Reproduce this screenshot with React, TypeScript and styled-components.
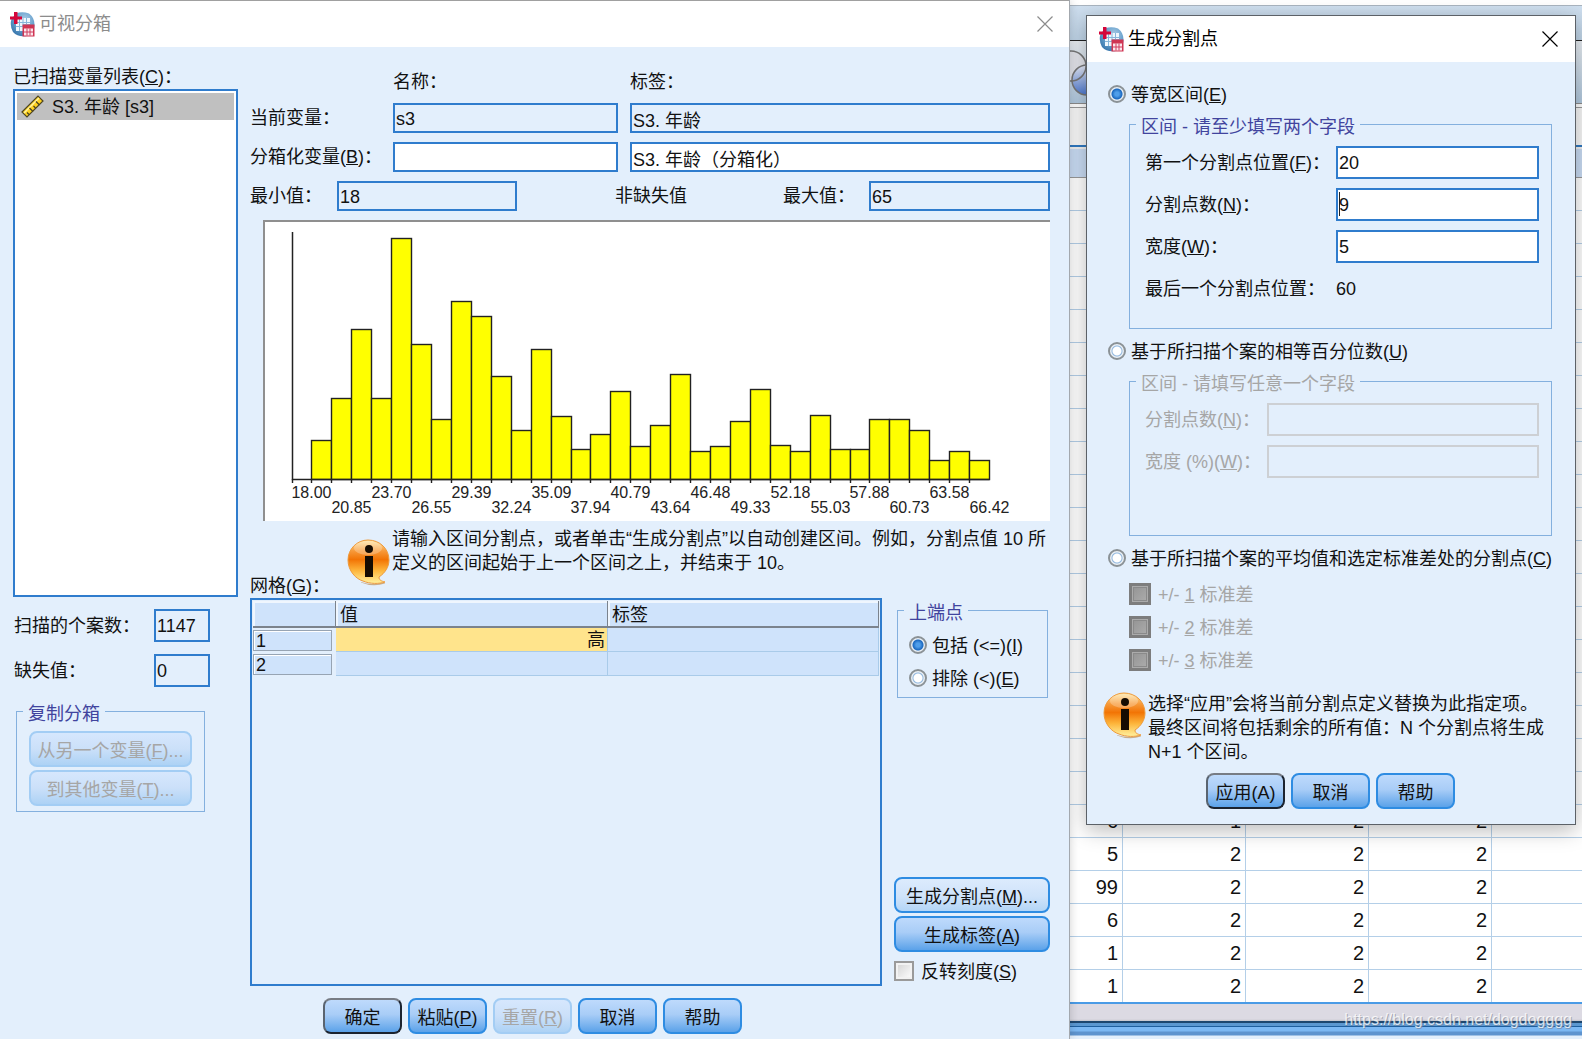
import React from "react";
import styled, { createGlobalStyle, css } from "styled-components";

const GlobalStyle = createGlobalStyle`
  * { box-sizing: border-box; }
  body { margin: 0; background: #e3effc; }
  body, button, input, table {
    font-family: "Liberation Sans", "Noto Sans CJK SC", sans-serif;
    font-size: 18px;
    line-height: 24px;
    color: #111;
  }
`;

const color = {
  panel: "#e3effc",
  line: "#2f7ccd",
  groove: "#84b0de",
  legend: "#41449e",
  muted: "#a6a6a6",
  cell: "#cfe3fb",
  grid: "#a9cbe9",
};

/* ---------- windows ---------- */

const Desktop = styled.div`
  display: flex;
  min-height: 100vh;
  overflow: hidden;
`;

const BinningWindow = styled.main`
  flex: 1 1 auto;
  position: relative;
  z-index: 1;
  display: flex;
  flex-direction: column;
  background: ${color.panel};
  border-top: 1px solid #a0a0a0;
  box-shadow: 0 0 0 1px #a3a8ae, 0 0 10px rgba(0, 0, 0, 0.22);
`;

const TitleBar = styled.header<{ $inactive?: boolean }>`
  display: flex;
  align-items: center;
  gap: 4px;
  height: 46px;
  padding: 0 16px 0 10px;
  background: #fff;
  color: ${(p) => (p.$inactive ? "#8c8c8c" : "#000")};
`;

const Title = styled.h1`
  flex: 1;
  margin: 0;
  font-size: 18px;
  font-weight: 400;
`;

const CloseButton = styled.button`
  display: flex;
  padding: 0;
  border: 0;
  background: none;
  color: inherit;
`;

const WindowBody = styled.div`
  flex: 1;
  display: grid;
  grid-template-columns: 225px 1fr;
  column-gap: 12px;
  padding: 18px 19px 12px 13px;
`;

const ButtonBar = styled.div`
  display: flex;
  justify-content: center;
  gap: 6px;
`;

const Footer = styled(ButtonBar)`
  padding: 0 4px 5px 0;
`;

/* ---------- controls ---------- */

type Tone = "normal" | "soft" | "default";

const Button = styled.button<{ $tone?: Tone; $wide?: boolean }>`
  width: ${(p) => (p.$wide ? "100%" : "79px")};
  height: 36px;
  padding: 3px 0 0;
  white-space: nowrap;
  border: 2px solid #2e8ce2;
  border-radius: 8px;
  background: linear-gradient(#bedafc, #a9cdf7 45%, #5ba2e9);
  ${(p) =>
    p.$tone === "soft" &&
    css`
      background: linear-gradient(#dcebfd, #cfe3fa 55%, #b3d5f6);
    `}
  ${(p) =>
    p.$tone === "default" &&
    css`
      border-color: #777c84 #1c2430 #1c2430 #5a6470;
    `}
  &:disabled {
    color: ${color.muted};
    border-color: #a3cdf4;
    background: linear-gradient(#d6e7fd, #cbe0f9 50%, #add2f5);
  }
`;

const Field = styled.input<{ $tall?: boolean; $caret?: boolean }>`
  width: 100%;
  min-width: 0;
  height: ${(p) => (p.$tall ? 33 : 30)}px;
  padding: 2px 1px 0;
  border: 2px solid ${color.line};
  border-radius: 0;
  background: #fff;
  outline: none;
  &:read-only {
    background: ${color.panel};
  }
  &:disabled {
    background: ${color.panel};
    border-color: #cdd0d4;
  }
  ${(p) =>
    p.$caret &&
    css`
      background: linear-gradient(#222, #222) 1px 2px / 1px 24px no-repeat #fff;
    `}
`;

const Radio = styled.input.attrs({ type: "radio" })`
  appearance: none;
  flex: none;
  width: 18px;
  height: 18px;
  margin: 0;
  border: 2px solid #8b9296;
  border-radius: 50%;
  background: radial-gradient(circle, #fff 0 4px, #8fb6de 5px, #e9eff4 6px);
  &:checked {
    background: radial-gradient(circle, #4f9eea 0 2px, #1a68c0 5px, #e6edf3 6px);
  }
`;

const Checkbox = styled.input.attrs({ type: "checkbox" })`
  appearance: none;
  flex: none;
  width: 20px;
  height: 20px;
  margin: 0;
  border: 2px solid #9a9a9a;
  background: linear-gradient(135deg, #d2d2d2, #fff);
  box-shadow: inset 0 0 0 2px #f2f2f2;
  &:disabled {
    width: 22px;
    height: 22px;
    border: 3px solid #7d7d7d;
    background: linear-gradient(135deg, #939393, #adadad);
    box-shadow: inset 0 0 0 1px #ababab, inset 0 0 0 2px #8a8a8a;
  }
`;

const Option = styled.label<{ $muted?: boolean; $gap: number; $height: number }>`
  display: flex;
  align-items: center;
  gap: ${(p) => p.$gap}px;
  height: ${(p) => p.$height}px;
  white-space: nowrap;
  color: ${(p) => (p.$muted ? color.muted : "inherit")};
  span {
    padding-top: 2px;
  }
`;

const Label = styled.label<{ $muted?: boolean }>`
  white-space: nowrap;
  color: ${(p) => (p.$muted ? color.muted : "inherit")};
`;

const Group = styled.fieldset<{ $muted?: boolean }>`
  min-width: 0;
  margin: 0;
  padding: 0;
  border: 1px solid ${color.groove};
  legend {
    height: 24px;
    margin-left: 6px;
    padding: 7px 5px 0;
    line-height: 17px;
    color: ${(p) => (p.$muted ? color.muted : color.legend)};
  }
`;

/* ---------- left column ---------- */

const SideColumn = styled.section`
  display: flex;
  flex-direction: column;
`;

const VariableList = styled.ul`
  height: 508px;
  margin: 0 0 12px;
  padding: 2px;
  list-style: none;
  border: 2px solid ${color.line};
  background: #fff;
`;

const VariableItem = styled.li`
  display: flex;
  align-items: center;
  gap: 8px;
  height: 27px;
  padding: 0 4px;
  background: #c0c0c0;
`;

const CountRow = styled.div`
  display: grid;
  grid-template-columns: 1fr 56px;
  align-items: center;
  margin: 0 28px 12px 1px;
`;

const CopyGroup = styled(Group)`
  width: 189px;
  margin-left: 3px;
  div {
    display: grid;
    gap: 3px;
    padding: 8px 12px 5px;
  }
`;

/* ---------- right column ---------- */

const MainColumn = styled.section`
  display: flex;
  flex-direction: column;
  padding-top: 5px;
`;

const VariableGrid = styled.div`
  display: grid;
  grid-template-columns: 131px 225px 1fr;
  gap: 9px 12px;
  align-items: center;
`;

const RangeRow = styled.div`
  display: grid;
  grid-template-columns: 87px 180px 1fr 86px 181px;
  align-items: center;
  margin: 9px 0;
`;

const RangeCaption = styled.span`
  padding-left: 98px;
`;

const ChartFrame = styled.figure`
  height: 301px;
  margin: 0 0 6px 13px;
  background: #fff;
  border: solid #8f8f8f;
  border-width: 2px 0 0 2px;
  svg {
    display: block;
  }
`;

const HintRow = styled.div`
  display: grid;
  grid-template-columns: 97px 45px 1fr;
  height: 71px;
  ${Label} {
    align-self: end;
  }
  svg {
    margin-top: 12px;
  }
`;

const Hint = styled.p`
  margin: 0;
`;

const LowerRow = styled.div`
  flex: 1;
  display: grid;
  grid-template-columns: 1fr 156px;
  column-gap: 12px;
`;

const GridBox = styled.div`
  padding: 1px;
  border: 2px solid ${color.line};
`;

const BinTable = styled.table`
  width: 100%;
  table-layout: fixed;
  border-collapse: separate;
  border-spacing: 0;
  thead th {
    height: 27px;
    padding: 3px 4px 0;
    text-align: left;
    font-weight: 400;
    line-height: 20px;
    background: ${color.cell};
    border: solid #7b838d;
    border-width: 0 1px 2px 0;
    box-shadow: inset 2px 2px 0 #eff6fe;
  }
  thead th:first-child {
    width: 83px;
  }
  thead th:nth-child(2) {
    width: 272px;
  }
`;

const RowHeader = styled.th`
  height: 24px;
  padding: 0 4px 0 0;
  text-align: left;
  font-weight: 400;
  span {
    display: block;
    height: 21px;
    padding-left: 2px;
    line-height: 20px;
    background: ${color.cell};
    border: 1px solid #97a4b3;
    box-shadow: inset 1px 1px 0 #fff;
  }
`;

const BinCell = styled.td<{ $active?: boolean }>`
  height: 24px;
  padding: 0 2px;
  text-align: right;
  line-height: 22px;
  background: ${(p) => (p.$active ? "#ffe48c" : color.cell)};
  border: solid ${color.grid};
  border-width: 0 1px 1px 0;
`;

const Tools = styled.div`
  display: flex;
  flex-direction: column;
`;

const EndpointGroup = styled(Group)`
  margin: 0 2px auto 3px;
  div {
    padding: 6px 0 3px 11px;
  }
`;

const ToolButtons = styled.div`
  display: grid;
  gap: 3px;
  margin-bottom: 4px;
`;

/* ---------- data editor behind the dialog ---------- */

const Editor = styled.section`
  flex: 0 0 513px;
  position: relative;
  display: flex;
  flex-direction: column;
  background: #fff;
`;

const EditorCaption = styled.div`
  height: 36px;
  margin-top: 5px;
  border-top: 1px solid #a9b4bf;
  border-bottom: 1px solid #222;
  background: linear-gradient(#cfdfef, #bfd4e7);
`;

const EditorToolbar = styled.div`
  height: 63px;
  padding-top: 9px;
  border-bottom: 1px solid #8d8d8d;
  background: linear-gradient(#e8edf2, #b0c8de);
  svg {
    display: block;
  }
`;

const CellBar = styled.div`
  height: 40px;
  margin-top: 3px;
  background: #f8f8f8;
  border-top: 1px solid #999;
  border-bottom: 2px solid #2f78c0;
`;

const ColumnBar = styled.div`
  height: 31px;
  border-top: 2px solid #f0f0f0;
  border-bottom: 1px solid #999;
  background: #c9dcf4;
`;

const DataTable = styled.table`
  width: 100%;
  table-layout: fixed;
  border-spacing: 0;
  border-bottom: 2px solid #4a9be6;
  td {
    height: 33px;
    padding: 0 4px 0 0;
    font-size: 20px;
    text-align: right;
    border: solid #b4cfe8;
    border-width: 0 1px 1px 0;
  }
  tr:first-child td {
    width: 123px;
  }
  tr:first-child td:first-child {
    width: 54px;
  }
  tr:first-child td:last-child {
    width: auto;
  }
  td:last-child {
    border-right: 0;
  }
  tr:last-child td {
    border-bottom: 0;
    height: 32px;
  }
`;

const StatusBar = styled.footer`
  flex: 1;
  padding-right: 10px;
  text-align: right;
  font-size: 16px;
  line-height: 32px;
  color: rgba(255, 255, 255, 0.75);
  text-shadow: 1px 1px 0 rgba(120, 125, 140, 0.55);
  background: linear-gradient(
    #dcdae3 0 15px,
    #c4c4cc 17px,
    #1d466e 17px 19px,
    #5b97d0 19px 22px,
    #1f5f9e 22px 23px,
    #7cb8f3 23px 27px,
    #5e94cf 28px 31px,
    #e3effc 32px
  );
`;

/* ---------- cut point dialog ---------- */

const Dialog = styled.div`
  position: absolute;
  top: 15px;
  right: 6px;
  width: 490px;
  background: ${color.panel};
  border: 1px solid #5c6167;
  box-shadow: 0 5px 20px rgba(0, 0, 0, 0.28);
  ${TitleBar} {
    padding: 0 17px 0 12px;
    gap: 4px;
  }
`;

const DialogBody = styled.form`
  padding: 20px 22px 15px 21px;
`;

const DialogGroup = styled(Group)<{ $labels: number; $rest: number }>`
  margin: 6px 1px 10px 21px;
  > div {
    display: grid;
    grid-template-columns: ${(p) => p.$labels}px 1fr;
    grid-auto-rows: 33px;
    row-gap: 9px;
    align-items: center;
    padding: 10px 12px ${(p) => p.$rest}px 15px;
  }
`;

const DeviationList = styled.div`
  padding: 7px 0 16px 21px;
`;

const DialogHint = styled.div`
  display: grid;
  grid-template-columns: 45px 1fr;
  margin: 0 0 9px -5px;
`;

/* ---------- drawings ---------- */

const AppLogo = () => (
  <svg width="25" height="25" viewBox="0 0 25 25" aria-hidden="true">
    <defs>
      <radialGradient id="globe" cx="0.6" cy="0.3" r="0.8">
        <stop offset="0" stopColor="#a9cbe6" />
        <stop offset="0.55" stopColor="#629dca" />
        <stop offset="1" stopColor="#2f6ea6" />
      </radialGradient>
    </defs>
    <path d="M6 1.500Q12-1 19 1.500 25 6 24.500 14 24 22 17 24 8 25.500 3 20-.5 14 1.500 7z" fill="url(#globe)" />
    <path d="M8 6h12v6h-7v7H6v-9z" fill="#eef6fc" />
    <path d="M6 10.500h14M6 14.500h7M9.500 7v12M13 6v8M16.500 6v6" stroke="#86b6da" strokeWidth="1" />
    <path d="M4 0h3.500v4.500h4.500v3h-4.500v4.500h-3.500v-4.500h-4v-3h4z" fill="#d4063a" />
    <rect x="12.500" y="12.500" width="12" height="12" fill="#cf3553" />
    <path d="M14 16.500h9v7h-9z" fill="#fbe6ec" />
    <path d="M14 20h9M17 16.500v7M20 16.500v7" stroke="#cf3c5f" strokeWidth="1" />
  </svg>
);

const CloseIcon = () => (
  <svg width="16" height="16" viewBox="0 0 16 16" aria-hidden="true">
    <path d="M0.500 0.500l15 15M15.500 0.500l-15 15" stroke="currentColor" strokeWidth="1.200" />
  </svg>
);

const RulerIcon = () => (
  <svg width="23" height="23" viewBox="0 0 23 23" aria-hidden="true">
    <path d="M1 17L17 1l5 5L6 22z" fill="#ffd21f" stroke="#4d4522" strokeWidth="1.200" />
    <path d="M3 18L18 3" stroke="#fff3a4" strokeWidth="1.500" />
    <path d="M6 17.500l2 2M8.500 13l3.500 3.500M12.500 11l2 2M15 6.500l3.500 3.500" stroke="#4d4522" strokeWidth="1.300" />
  </svg>
);

const InfoIcon = () => (
  <svg width="43" height="47" viewBox="0 0 43 47" aria-hidden="true">
    <defs>
      <linearGradient id="amber" x1="0" y1="0" x2="0" y2="1">
        <stop offset="0" stopColor="#ffe9a8" />
        <stop offset="0.25" stopColor="#f79a3a" />
        <stop offset="0.45" stopColor="#f27405" />
        <stop offset="0.7" stopColor="#fdb43a" />
        <stop offset="1" stopColor="#fff2a0" />
      </linearGradient>
    </defs>
    <path d="M14 43q12 4 23 0l1 1.500q-12 4-24-1z" fill="#b9803a" opacity="0.600" />
    <path
      d="M21 1C10 1 1 10 1 21s8 19 15 21c7 3 16 3 22 1-4-1-6-2-6-5 6-4 10-10 10-17C42 10 33 1 21 1z"
      fill="url(#amber)"
      stroke="#ee9a3c"
      strokeWidth="1"
    />
    <ellipse cx="21" cy="9" rx="14" ry="7" fill="#fff" opacity="0.250" />
    <circle cx="22" cy="10" r="4" fill="#160c02" />
    <path d="M18 17h8v21h-8z" fill="#160c02" />
  </svg>
);

const VennIcon = () => (
  <svg width="40" height="46" viewBox="0 0 40 46" aria-hidden="true">
    <defs>
      <linearGradient id="venn" x1="0" y1="0" x2="0" y2="1">
        <stop offset="0" stopColor="#e8ecf8" />
        <stop offset="1" stopColor="#4c78d0" />
      </linearGradient>
    </defs>
    <circle cx="2" cy="16" r="15" fill="#e3e4ea" stroke="#777" strokeWidth="1.500" />
    <circle cx="18" cy="30" r="15" fill="url(#venn)" stroke="#777" strokeWidth="1.500" />
    <path d="M17 16A15 15 0 0 1 2 31" fill="none" stroke="#777" strokeWidth="1.500" />
  </svg>
);

const bars = [
  39, 81, 150, 81, 241, 135, 60, 178, 163, 103, 49, 130, 63, 30, 45, 88, 33, 54, 105, 28, 33, 58,
  90, 34, 28, 64, 30, 30, 60, 60, 49, 19, 28, 19,
];

const ticks = [
  "18.00", "20.85", "23.70", "26.55", "29.39", "32.24", "35.09", "37.94", "40.79", "43.64",
  "46.48", "49.33", "52.18", "55.03", "57.88", "60.73", "63.58", "66.42",
];

const Histogram = () => {
  const left = 27;
  const base = 257;
  const step = 19.93;
  const edge = (i: number) => Math.floor(left + step * i) + 0.5;
  return (
    <svg width="100%" height="299" role="img" aria-label="S3. 年龄">
      {bars.map((h, i) => (
        <rect
          key={i}
          x={edge(i + 1)}
          y={base - h + 0.5}
          width={edge(i + 2) - edge(i + 1)}
          height={h}
          fill="#ff0"
          stroke="#222"
          strokeWidth="1.400"
        />
      ))}
      <path
        d={`M${edge(0)} 10V${base + 0.5}H${edge(35)}`}
        fill="none"
        stroke="#222"
        strokeWidth="1.500"
      />
      {Array.from({ length: 35 }, (_, i) => (
        <path key={i} d={`M${edge(i)} ${base}v4`} stroke="#222" strokeWidth="1.400" />
      ))}
      {ticks.map((t, i) => (
        <text
          key={t}
          x={edge(i * 2 + 1)}
          y={i % 2 ? 291 : 276}
          textAnchor="middle"
          fontSize="16"
          fill="#222"
        >
          {t}
        </text>
      ))}
    </svg>
  );
};

const dataRows: string[][] = [
  ...Array.from({ length: 19 }, () => ["", "", "", ""]),
  ["6", "1", "2", "2"],
  ["5", "2", "2", "2"],
  ["99", "2", "2", "2"],
  ["6", "2", "2", "2"],
  ["1", "2", "2", "2"],
  ["1", "2", "2", "2"],
];

const Key = ({ k }: { k: string }) => (
  <>
    (<u>{k}</u>)
  </>
);

/* ---------- composition ---------- */

const CutPointDialog = () => (
  <Dialog role="dialog" aria-label="生成分割点">
    <TitleBar>
      <AppLogo />
      <Title as="h2">生成分割点</Title>
      <CloseButton type="button" aria-label="关闭">
        <CloseIcon />
      </CloseButton>
    </TitleBar>
    <DialogBody>
      <Option $gap={5} $height={24}>
        <Radio name="method" defaultChecked />
        <span>等宽区间<Key k="E" /></span>
      </Option>
      <DialogGroup $labels={191} $rest={23}>
        <legend>区间 - 请至少填写两个字段</legend>
        <div>
          <Label htmlFor="first">第一个分割点位置<Key k="F" />：</Label>
          <Field id="first" $tall defaultValue="20" />
          <Label htmlFor="count">分割点数<Key k="N" />：</Label>
          <Field id="count" $tall $caret defaultValue="9" />
          <Label htmlFor="width">宽度<Key k="W" />：</Label>
          <Field id="width" $tall defaultValue="5" />
          <Label as="span">最后一个分割点位置：</Label>
          <span>60</span>
        </div>
      </DialogGroup>
      <Option $gap={5} $height={24}>
        <Radio name="method" />
        <span>基于所扫描个案的相等百分位数<Key k="U" /></span>
      </Option>
      <DialogGroup $labels={122} $rest={57} $muted>
        <legend>区间 - 请填写任意一个字段</legend>
        <div>
          <Label htmlFor="pcount" $muted>分割点数<Key k="N" />：</Label>
          <Field id="pcount" $tall disabled />
          <Label htmlFor="pwidth" $muted>宽度 (%)<Key k="W" />：</Label>
          <Field id="pwidth" $tall disabled />
        </div>
      </DialogGroup>
      <Option $gap={5} $height={24}>
        <Radio name="method" />
        <span>基于所扫描个案的平均值和选定标准差处的分割点<Key k="C" /></span>
      </Option>
      <DeviationList>
        {["1", "2", "3"].map((n) => (
          <Option key={n} $muted $gap={7} $height={33}>
            <Checkbox disabled />
            <span>+/- <u>{n}</u> 标准差</span>
          </Option>
        ))}
      </DeviationList>
      <DialogHint>
        <InfoIcon />
        <Hint>
          选择“应用”会将当前分割点定义替换为此指定项。
          <br />
          最终区间将包括剩余的所有值：N 个分割点将生成
          <br />
          N+1 个区间。
        </Hint>
      </DialogHint>
      <ButtonBar>
        <Button type="button" $tone="default">应用(A)</Button>
        <Button type="button">取消</Button>
        <Button type="button">帮助</Button>
      </ButtonBar>
    </DialogBody>
  </Dialog>
);

export default function App() {
  return (
    <Desktop>
      <GlobalStyle />
      <BinningWindow>
        <TitleBar $inactive>
          <AppLogo />
          <Title>可视分箱</Title>
          <CloseButton type="button" aria-label="关闭">
            <CloseIcon />
          </CloseButton>
        </TitleBar>
        <WindowBody>
          <SideColumn>
            <Label as="span" id="scanned">已扫描变量列表<Key k="C" />：</Label>
            <VariableList role="listbox" aria-labelledby="scanned">
              <VariableItem role="option" aria-selected>
                <RulerIcon />
                S3. 年龄 [s3]
              </VariableItem>
            </VariableList>
            <CountRow>
              <Label htmlFor="cases">扫描的个案数：</Label>
              <Field id="cases" $tall readOnly value="1147" />
            </CountRow>
            <CountRow>
              <Label htmlFor="missing">缺失值：</Label>
              <Field id="missing" $tall readOnly value="0" />
            </CountRow>
            <CopyGroup>
              <legend>复制分箱</legend>
              <div>
                <Button type="button" $wide disabled>从另一个变量<Key k="F" />...</Button>
                <Button type="button" $wide disabled>到其他变量<Key k="T" />...</Button>
              </div>
            </CopyGroup>
          </SideColumn>
          <MainColumn>
            <VariableGrid>
              <span />
              <span>名称：</span>
              <span>标签：</span>
              <Label htmlFor="current">当前变量：</Label>
              <Field id="current" readOnly value="s3" />
              <Field aria-label="标签" readOnly value="S3. 年龄" />
              <Label htmlFor="binned">分箱化变量<Key k="B" />：</Label>
              <Field id="binned" />
              <Field aria-label="分箱化变量标签" defaultValue="S3. 年龄（分箱化）" />
            </VariableGrid>
            <RangeRow>
              <Label htmlFor="min">最小值：</Label>
              <Field id="min" readOnly value="18" />
              <RangeCaption>非缺失值</RangeCaption>
              <Label htmlFor="max">最大值：</Label>
              <Field id="max" readOnly value="65" />
            </RangeRow>
            <ChartFrame>
              <Histogram />
            </ChartFrame>
            <HintRow>
              <Label as="span">网格<Key k="G" />：</Label>
              <InfoIcon />
              <Hint>
                请输入区间分割点，或者单击“生成分割点”以自动创建区间。例如，分割点值 10 所
                <wbr />
                定义的区间起始于上一个区间之上，并结束于 10。
              </Hint>
            </HintRow>
            <LowerRow>
              <GridBox>
                <BinTable>
                  <thead>
                    <tr>
                      <th />
                      <th>值</th>
                      <th>标签</th>
                    </tr>
                  </thead>
                  <tbody>
                    <tr>
                      <RowHeader><span>1</span></RowHeader>
                      <BinCell $active>高</BinCell>
                      <BinCell />
                    </tr>
                    <tr>
                      <RowHeader><span>2</span></RowHeader>
                      <BinCell />
                      <BinCell />
                    </tr>
                  </tbody>
                </BinTable>
              </GridBox>
              <Tools>
                <EndpointGroup>
                  <legend>上端点</legend>
                  <div>
                    <Option $gap={5} $height={33}>
                      <Radio name="endpoint" defaultChecked />
                      <span>包括 (&lt;=)<Key k="I" /></span>
                    </Option>
                    <Option $gap={5} $height={33}>
                      <Radio name="endpoint" />
                      <span>排除 (&lt;)<Key k="E" /></span>
                    </Option>
                  </div>
                </EndpointGroup>
                <ToolButtons>
                  <Button type="button" $wide $tone="soft">生成分割点<Key k="M" />...</Button>
                  <Button type="button" $wide>生成标签<Key k="A" /></Button>
                </ToolButtons>
                <Option $gap={7} $height={30}>
                  <Checkbox />
                  <span>反转刻度<Key k="S" /></span>
                </Option>
              </Tools>
            </LowerRow>
          </MainColumn>
        </WindowBody>
        <Footer>
          <Button type="button" $tone="default">确定</Button>
          <Button type="button">粘贴<Key k="P" /></Button>
          <Button type="button" disabled>重置<Key k="R" /></Button>
          <Button type="button">取消</Button>
          <Button type="button">帮助</Button>
        </Footer>
      </BinningWindow>
      <Editor>
        <EditorCaption />
        <EditorToolbar>
          <VennIcon />
        </EditorToolbar>
        <CellBar />
        <ColumnBar />
        <DataTable>
          <tbody>
            {dataRows.map((row, i) => (
              <tr key={i}>
                {row.map((v, j) => (
                  <td key={j}>{v}</td>
                ))}
                <td />
              </tr>
            ))}
          </tbody>
        </DataTable>
        <StatusBar>https://blog.csdn.net/dogdogggg</StatusBar>
        <CutPointDialog />
      </Editor>
    </Desktop>
  );
}
